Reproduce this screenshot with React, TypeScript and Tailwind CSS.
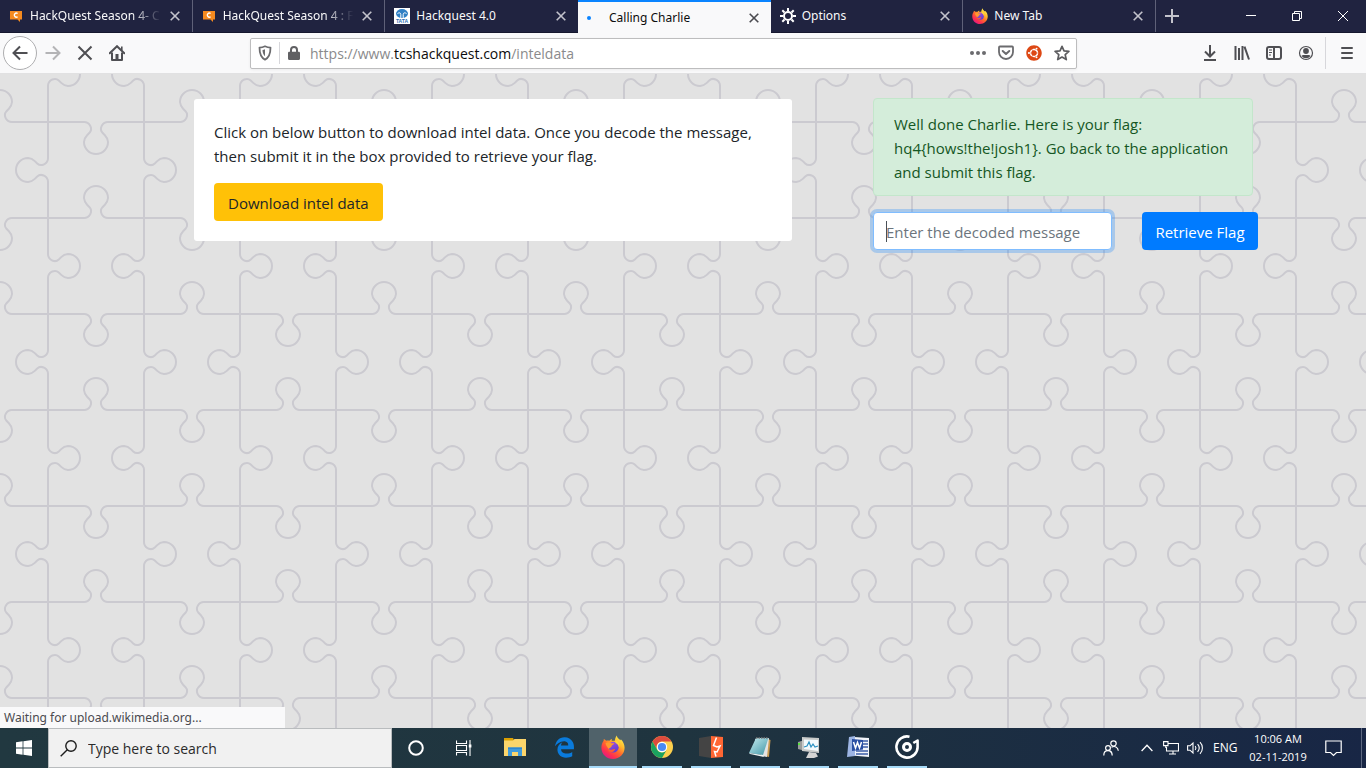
import React from "react";
import { FaEdgeLegacy, FaUbuntu } from "react-icons/fa";

const KNOB =
  "M0 -48V-12A7 7 0 0 0 3.5 -5.9L4.4 -5.5A5.9 5.9 0 0 0 10.8 -6.5L13.2 -8.9A11 11 0 0 1 20 -12A12 12 0 0 1 20 12A11 11 0 0 1 13.2 8.9L10.8 6.5A5.9 5.9 0 0 0 4.4 5.5L3.5 5.9A7 7 0 0 0 0 12V48";

const PIECES: [number, number, number][] = [
  [48, 0, 0],
  [48, 192, 0],
  [48, 96, 180],
  [144, 0, 180],
  [144, 192, 180],
  [144, 96, 0],
  [96, 48, 90],
  [0, 48, 270],
  [192, 48, 270],
  [96, 144, 270],
  [0, 144, 90],
  [192, 144, 90],
];

function Jigsaw() {
  return (
    <svg className="absolute inset-0 h-full w-full" aria-hidden="true">
      <defs>
        <pattern id="jigsaw" width="192" height="192" patternUnits="userSpaceOnUse">
          {PIECES.map(([x, y, r]) => (
            <path
              key={`${x}-${y}`}
              d={KNOB}
              transform={`translate(${x} ${y}) rotate(${r})`}
              fill="none"
              stroke="#cbcad0"
              strokeWidth="2"
            />
          ))}
        </pattern>
      </defs>
      <rect width="100%" height="100%" fill="url(#jigsaw)" />
    </svg>
  );
}

function Firefox({ id, className }: { id: string; className: string }) {
  return (
    <svg viewBox="0 0 24 24" className={className} aria-hidden="true">
      <defs>
        <linearGradient id={`${id}-body`} x1="0.85" y1="0.05" x2="0.2" y2="0.95">
          <stop offset="0" stopColor="#fff44f" />
          <stop offset="0.3" stopColor="#ffb92e" />
          <stop offset="0.55" stopColor="#ff6a2b" />
          <stop offset="0.8" stopColor="#ff2f50" />
          <stop offset="1" stopColor="#e01a86" />
        </linearGradient>
        <linearGradient id={`${id}-globe`} x1="0.3" y1="0" x2="0.7" y2="1">
          <stop offset="0" stopColor="#a04be0" />
          <stop offset="1" stopColor="#5b3fd0" />
        </linearGradient>
      </defs>
      <path
        d="M15.8 0.4c.3 1.6 1.2 2.8 2.6 4 .5-.1.8.3 1.2.9.2-.3.3-.6.2-1.1 2.4 2.3 3.8 5.3 3.8 8.600C23.600 19.200 18.400 24 12 24S.4 19.200.4 12.700c0-2.600.8-5.100 2.200-6.900L2.800 4c1 .4 1.800 1 2.300 1.700 1-.3 2.200-.3 3.300.1C9 5 9.800 4.200 11 3.900c-.3.700-.4 1.200-.3 1.900h3.100c.2-2.100.8-3.900 2-5.400z"
        fill={`url(#${id}-body)`}
      />
      <circle cx="12.300" cy="12.200" r="5.400" fill={`url(#${id}-globe)`} />
      <path
        d="M4.500 8.200c1.800-1.400 4-1.200 5.800 0h3c-.3 1.200-1.500 1.700-2.500 2.200l-.5 1.600c-1 .8-2 1.200-2.800 2.200-.8-2-2.600-3.200-3-6z"
        fill="#ff9a2e"
      />
      <path d="M7.300 13.500c1 1.300 2.700 1.700 4.200 1 1.200-.6 2-.8 2.600-.1-1 2.200-3.500 3.400-5.800 2.200-1-.8-1.300-2-1-3.100z" fill="#ff5a34" />
      <path d="M14.500 5.500c2.800.6 4.600 3.300 3.600 7.200-.3-2.500-1.500-3.700-3.600-4.700z" fill="#ffd53a" />
    </svg>
  );
}

function Comment() {
  return (
    <svg viewBox="0 0 14 12" className="mr-px h-3 w-[14px] shrink-0" aria-hidden="true">
      <path d="M1 1h12v8.500H11V12L8.500 9.500H1z" fill="#f58a1f" />
      <path d="M8.600 3.600A2 2 0 1 0 8.600 6.700" fill="none" stroke="#fff" strokeWidth="1.300" />
    </svg>
  );
}

function Tata() {
  return (
    <svg viewBox="0 0 16 16" className="h-4 w-4 shrink-0" aria-hidden="true">
      <rect width="16" height="16" fill="#fff" />
      <ellipse cx="8" cy="5.600" rx="6" ry="4.500" fill="#2f7fc4" />
      <path d="M6.800 10V6.500C6.800 4.500 5 4.500 3.500 5.500M9.200 10V6.500C9.200 4.500 11 4.500 12.500 5.500" fill="none" stroke="#fff" strokeWidth="1" />
      <text x="8" y="15" textAnchor="middle" fontSize="5" fontWeight="700" fill="#2f6fb4" fontFamily="Liberation Sans, sans-serif">
        TATA
      </text>
    </svg>
  );
}

function Gear() {
  return (
    <svg viewBox="0 0 16 16" className="h-4 w-4 shrink-0" fill="none" stroke="#fff" aria-hidden="true">
      <circle cx="8" cy="8" r="4" strokeWidth="2" />
      <path
        d="M8 0v3M8 13v3M0 8h3M13 8h3M2.300 2.300l2.200 2.200M11.500 11.500l2.200 2.200M2.300 13.700l2.200-2.200M11.500 4.500l2.200-2.200"
        strokeWidth="2"
      />
    </svg>
  );
}

function Loading() {
  return (
    <span className="flex h-4 w-4 shrink-0 items-center">
      <span className="h-1 w-1 rounded-full bg-[#0a84ff]" />
    </span>
  );
}

function Cross({ className }: { className: string }) {
  return (
    <svg viewBox="0 0 10 10" className={className} fill="none" stroke="currentColor" aria-hidden="true">
      <path d="M0.700 0.700l8.600 8.600M9.300 0.700L0.700 9.300" strokeWidth="1.600" />
    </svg>
  );
}

const TABS = [
  { icon: <Comment />, title: "HackQuest Season 4- C", active: false, line: true },
  { icon: <Comment />, title: "HackQuest Season 4 : F", active: false, line: true },
  { icon: <Tata />, title: "Hackquest 4.0", active: false, line: false },
  { icon: <Loading />, title: "Calling Charlie", active: true, line: false },
  { icon: <Gear />, title: "Options", active: false, line: true },
  { icon: <Firefox id="tab-ff" className="h-4 w-4 shrink-0" />, title: "New Tab", active: false, line: true },
];

function TabStrip() {
  return (
    <header className="flex h-[33px] border-b border-[#15172e] bg-[#202340] font-['Noto_Sans','Open_Sans',sans-serif] text-[12px] text-[#f9f9fa]">
      <div role="tablist" className="grid w-[1156px] grid-cols-6">
        {TABS.map((t) => (
          <div
            key={t.title}
            role="tab"
            aria-selected={t.active}
            className={
              t.active
                ? "-mb-px flex min-w-0 items-center gap-[6px] border-t-2 border-[#0a84ff] bg-[#f9f9fa] pl-[9px] pr-3 text-[#0c0c0d]"
                : t.line
                  ? "flex min-w-0 items-center gap-[6px] border-r border-[#5f6178] pl-[9px] pr-3"
                  : "flex min-w-0 items-center gap-[6px] pl-[9px] pr-3"
            }
          >
            {t.icon}
            <span
              className={
                t.title.length > 16
                  ? "min-w-0 flex-1 overflow-hidden whitespace-nowrap [mask-image:linear-gradient(to_right,black_76%,transparent_98%)]"
                  : "min-w-0 flex-1 whitespace-nowrap"
              }
            >
              {t.title}
            </span>
            <button aria-label="Close tab" className={t.active ? "text-[#4a4a4f]" : "text-[#c3c3cc]"}>
              <Cross className="h-[10px] w-[10px]" />
            </button>
          </div>
        ))}
      </div>
      <button aria-label="New tab" className="flex w-8 items-center justify-center text-[#c3c3cc]">
        <svg viewBox="0 0 14 14" className="h-[14px] w-[14px]" fill="none" stroke="currentColor" strokeWidth="2">
          <path d="M7 0v14M0 7h14" />
        </svg>
      </button>
      <div className="ml-auto flex">
        <button aria-label="Minimize" className="flex w-[46px] items-center justify-center">
          <svg viewBox="0 0 10 10" className="h-[10px] w-[10px]" stroke="#fff" fill="none">
            <path d="M0 4.500h10" />
          </svg>
        </button>
        <button aria-label="Restore" className="flex w-[46px] items-center justify-center">
          <svg viewBox="0 0 10 10" className="h-[10px] w-[10px]" stroke="#fff" fill="none">
            <path d="M.5 2.500h7v7h-7zM2.500 2.500v-2h7v7h-2" />
          </svg>
        </button>
        <button aria-label="Close" className="flex w-[46px] items-center justify-center">
          <svg viewBox="0 0 10 10" className="h-[10px] w-[10px]" stroke="#fff" fill="none">
            <path d="M0 0l10 10M10 0L0 10" />
          </svg>
        </button>
      </div>
    </header>
  );
}

function Toolbar() {
  return (
    <nav className="flex h-[41px] items-center border-b border-[#e1e1e2] bg-[#f9f9fa] text-[#4f4f53]">
      <div className="flex w-[250px] shrink-0 items-center pl-[3px]">
        <button aria-label="Back" className="flex h-[34px] w-[34px] items-center justify-center rounded-full border border-[#aeaeb0] bg-white">
          <svg viewBox="0 0 16 16" className="h-4 w-4" fill="none" stroke="currentColor" strokeWidth="2">
            <path d="M15.500 8H1.500M8 1.500L1.500 8L8 14.500" />
          </svg>
        </button>
        <button aria-label="Forward" className="flex h-8 w-8 items-center justify-center text-[#b4b4b6]">
          <svg viewBox="0 0 16 16" className="h-4 w-4" fill="none" stroke="currentColor" strokeWidth="2">
            <path d="M.5 8h14M8 1.500L14.500 8L8 14.500" />
          </svg>
        </button>
        <button aria-label="Stop" className="flex h-8 w-8 items-center justify-center">
          <svg viewBox="0 0 16 16" className="h-4 w-4" fill="none" stroke="currentColor" strokeWidth="2">
            <path d="M1.500 1.500l13 13M14.500 1.500l-13 13" />
          </svg>
        </button>
        <button aria-label="Home" className="flex h-8 w-8 items-center justify-center">
          <svg viewBox="0 0 16 16" className="h-4 w-4" fill="none" stroke="currentColor" strokeWidth="2">
            <path d="M.7 8.300L8 1.200l7.300 7.100" strokeLinecap="round" />
            <path d="M3 7.500V15h10V7.500" strokeLinejoin="round" />
            <rect x="6.500" y="9" width="3" height="6" fill="currentColor" stroke="none" />
            <rect x="12" y="1.500" width="1.600" height="4" fill="currentColor" stroke="none" />
          </svg>
        </button>
      </div>

      <div className="flex h-[31px] min-w-0 flex-1 items-center rounded-[2px] border border-[#bdbdbe] bg-white px-[6px] shadow-[0_1px_3px_rgba(0,0,0,0.06)]">
        <svg viewBox="0 0 16 16" className="h-4 w-4 shrink-0" fill="none" stroke="#6b6b6e" strokeWidth="1.800">
          <path d="M8 1.300c1.800.9 3.800 1.300 5.500 1.300 0 5.400-1 9.900-5.500 12.100C3.500 12.500 2.500 8 2.500 2.600c1.700 0 3.700-.4 5.500-1.300z" strokeLinejoin="round" />
          <path d="M8 4.200v7c-1.700-1.400-2.400-3.400-2.500-6.200.9-.2 1.700-.4 2.500-.8z" fill="#6b6b6e" stroke="none" />
        </svg>
        <span className="ml-[6px] h-[22px] w-px shrink-0 bg-[#d7d7db]" />
        <svg viewBox="0 0 16 16" className="ml-[6px] h-4 w-4 shrink-0" fill="#606063">
          <path d="M2 8.200C2 7.300 2.600 6.800 3.400 6.800H4V5a4 4 0 0 1 8 0v1.800h.6c.8 0 1.400.5 1.400 1.400v5.300c0 .9-.6 1.500-1.400 1.500H3.400C2.600 15 2 14.400 2 13.500zM6 6.800h4V5a2 2 0 0 0-4 0z" />
        </svg>
        <div className="ml-2 min-w-0 flex-1 truncate text-[14px] text-[#8a8a8c]">
          https://www.<span className="text-[#0c0c0d]">tcshackquest.com</span>/inteldata
        </div>
        <div className="flex shrink-0 items-center gap-3">
          <button aria-label="Page actions">
            <svg viewBox="0 0 16 16" className="h-4 w-4" fill="#6b6b6e">
              <circle cx="2" cy="8" r="2" />
              <circle cx="8" cy="8" r="2" />
              <circle cx="14" cy="8" r="2" />
            </svg>
          </button>
          <button aria-label="Save to Pocket">
            <svg viewBox="0 0 16 16" className="h-4 w-4" fill="none" stroke="#6b6b6e" strokeWidth="1.800">
              <path d="M1 2.500c0-.6.300-1 .9-1h12.200c.6 0 .9.400.9 1V7a7 7 0 0 1-14 0z" />
              <path d="M4.700 6L8 9l3.300-3" strokeWidth="2" strokeLinecap="round" strokeLinejoin="round" />
            </svg>
          </button>
          <button aria-label="Ubuntu extension">
            <FaUbuntu className="h-4 w-4 text-[#dd4814]" />
          </button>
          <button aria-label="Bookmark">
            <svg viewBox="0 0 16 16" className="h-4 w-4" fill="none" stroke="#5c5c5f" strokeWidth="1.700" strokeLinejoin="round">
              <path d="M8 1.300l2 4.600 4.900.5-3.700 3.300 1.100 4.900L8 12.100l-4.300 2.500 1.100-4.900L1.100 6.400 6 5.900z" />
            </svg>
          </button>
        </div>
      </div>

      <div className="flex w-[289px] shrink-0 items-center justify-end">
        <button aria-label="Downloads" className="flex h-8 w-8 items-center justify-center">
          <svg viewBox="0 0 16 16" className="h-4 w-4" fill="none" stroke="currentColor" strokeWidth="2">
            <path d="M8 0v11M3 6.500l5 5 5-5M2 15h12" />
          </svg>
        </button>
        <button aria-label="Library" className="flex h-8 w-8 items-center justify-center">
          <svg viewBox="0 0 16 16" className="h-4 w-4" fill="none" stroke="currentColor" strokeWidth="2">
            <path d="M1.500 1v14M5 3v12M8.500 1v14M10.500 1.700L15 14.500" />
          </svg>
        </button>
        <button aria-label="Sidebars" className="flex h-8 w-8 items-center justify-center">
          <svg viewBox="0 0 16 16" className="h-4 w-4" fill="none" stroke="currentColor" strokeWidth="2">
            <rect x="1" y="2" width="14" height="12" rx="2" />
            <path d="M8 2v12" />
            <path d="M3 5h3M3 7.500h3M3 10h2" strokeWidth="1" />
          </svg>
        </button>
        <button aria-label="Account" className="flex h-8 w-8 items-center justify-center">
          <svg viewBox="0 0 16 16" className="h-4 w-4">
            <circle cx="8" cy="8" r="6.500" fill="none" stroke="currentColor" strokeWidth="1.200" />
            <circle cx="8" cy="6" r="2.900" fill="currentColor" />
            <path d="M3.500 11c1-1.600 2.500-1 4.500-1s3.500-.6 4.500 1A5.600 5.600 0 0 1 8 13.300 5.600 5.600 0 0 1 3.500 11z" fill="currentColor" />
          </svg>
        </button>
        <span className="ml-[3px] h-8 w-px bg-[#d7d7db]" />
        <button aria-label="Menu" className="ml-[5px] mr-[3px] flex h-8 w-8 items-center justify-center">
          <svg viewBox="0 0 16 16" className="h-4 w-4" fill="none" stroke="currentColor" strokeWidth="2" strokeLinecap="round">
            <path d="M3 3h10M3 8h10M3 13h10" />
          </svg>
        </button>
      </div>
    </nav>
  );
}

function PageBody() {
  return (
    <main className="relative flex-1 bg-[#e2e2e2] text-[15px] leading-6 text-[#212529]">
      <Jigsaw />
      <div className="relative flex items-start justify-center gap-[81px] pl-[86px] pt-6">
        <section className="mt-px w-[598px] rounded-[3px] bg-white p-5">
          <p className="mt-px">
            Click on below button to download intel data. Once you decode the message, then submit it in the box provided to
            retrieve your flag.
          </p>
          <button className="mt-[15px] h-[38px] rounded bg-[#ffc107] px-[14px] pt-[2px]">Download intel data</button>
        </section>
        <form className="w-[385px]" onSubmit={(e) => e.preventDefault()}>
          <p role="alert" className="mr-[5px] rounded border border-[#c3e6cb] bg-[#d4edda] px-5 pb-[11px] pt-[13px] text-[#155724]">
            Well done Charlie. Here is your flag: hq4&#123;hows!the!josh1&#125;. Go back to the application and submit this flag.
          </p>
          <div className="mt-4 flex justify-between">
            <div className="relative w-[239px]">
              <input
                type="text"
                aria-label="Decoded message"
                placeholder="Enter the decoded message"
                className="h-[38px] w-full rounded border border-[#80bdff] bg-white px-3 pt-[2px] shadow-[0_0_0_3px_rgba(0,123,255,0.25)] outline-none placeholder:text-[#6c757d]"
              />
              <span className="absolute left-[13px] top-[9px] h-[21px] w-px bg-[#495057]" />
            </div>
            <button type="submit" className="h-[38px] w-[116px] rounded bg-[#007bff] pt-[2px] text-white">
              Retrieve Flag
            </button>
          </div>
        </form>
      </div>
      <div className="absolute bottom-0 left-0 h-[21px] w-[285px] bg-[#f9f9fa] pl-1 font-['Noto_Sans','Open_Sans',sans-serif] text-[12px] leading-[22px] text-[#4a4a4f]">
        Waiting for upload.wikimedia.org...
      </div>
    </main>
  );
}

function Explorer() {
  return (
    <svg viewBox="0 0 22 20" className="h-5 w-[22px]">
      <path d="M0 1h9l1 2v3H0z" fill="#dba002" />
      <path d="M0 3.500h9L10.500 2H22v17H0z" fill="#fbd56b" />
      <path d="M4 19v-8.500h14V19h-4v-4H8v4z" fill="#3f9bdc" />
      <path d="M4 10.500h14V12H4z" fill="#2f86cf" />
    </svg>
  );
}

function Chrome() {
  return (
    <svg viewBox="0 0 22 22" className="h-[22px] w-[22px]">
      <circle cx="11" cy="11" r="11" fill="#fdd04d" />
      <path d="M1.500 5.500A11 11 0 0 1 20.500 5.500H11A5.500 5.500 0 0 0 6.200 13.700z" fill="#dd4b3e" />
      <path d="M1.500 5.500L6.200 13.700A5.500 5.500 0 0 0 15.700 13.700L11 22A11 11 0 0 1 1.500 5.500z" fill="#1aa260" />
      <circle cx="11" cy="11" r="5.200" fill="#fff" />
      <circle cx="11" cy="11" r="4.100" fill="#4a8af4" />
    </svg>
  );
}

function Burp() {
  return (
    <svg viewBox="0 0 24 24" className="h-6 w-6">
      <path d="M0 3l12-2v22L0 21z" fill="#444" />
      <path d="M12 1l12 1v20l-12 1z" fill="#ff6633" />
      <path d="M17.500 2.500l-3 8 3.500 1.500 3-1-3 6-2.500-.5 1.500 5" fill="none" stroke="#fff" strokeWidth="1.500" />
    </svg>
  );
}

function Notepad() {
  return (
    <svg viewBox="0 0 24 22" className="h-[22px] w-6">
      <defs>
        <linearGradient id="note-page" x1="0" y1="0" x2="1" y2="1">
          <stop offset="0" stopColor="#c7eef2" />
          <stop offset="1" stopColor="#3e94a5" />
        </linearGradient>
      </defs>
      <path d="M20 3l2.500 1L21 21l-4-1z" fill="#c99b52" />
      <path d="M7 3l14-1-2 19-5-1z" fill="#e4e4e4" />
      <path d="M8 2l12.500 0L15 19 1 17z" fill="url(#note-page)" />
      <path d="M8 2h12.500" stroke="#777" strokeWidth="1.500" strokeDasharray="1.500 1" />
      <path d="M1 17l14 2 1 2L2 18z" fill="#eef5f5" />
    </svg>
  );
}

function Monitor() {
  return (
    <svg viewBox="0 0 24 22" className="h-[22px] w-6">
      <path d="M1 6l7-2v11l-7-2z" fill="#9b9d9c" />
      <path d="M1 7h2v2H1z" fill="#57e33b" />
      <path d="M5 1l17 1v15L5 15z" fill="#c9cbca" />
      <path d="M7 3.500l14 .5v11L7 13z" fill="#f3fafd" />
      <path d="M7 11l3-1 2-4 2 5 2-3 2 3 3-1" fill="none" stroke="#2b91c2" strokeWidth="1.200" />
      <path d="M12 16l7 1 2 3.500-4 1.500H9z" fill="#d4d4d4" />
    </svg>
  );
}

function Word() {
  return (
    <svg viewBox="0 0 22 22" className="h-[22px] w-[22px]">
      <path d="M7 1l15 1v19L5 19.500z" fill="#f1f4fa" />
      <path d="M16 5h5M16 8h5M16 11h5M9 15h12M9 18h12" stroke="#3c5da8" strokeWidth="1.300" />
      <path d="M2 1l6-1v20l-8 1z" fill="#9db5e4" />
      <path d="M5 3l11 1v9.500L5 15z" fill="#2a4fa3" />
      <path d="M6.500 6l2 6 2-5.500 2 5.500 2-6" fill="none" stroke="#fff" strokeWidth="1.500" />
    </svg>
  );
}

function Groove() {
  return (
    <svg viewBox="0 0 24 24" className="h-6 w-6" fill="none" stroke="#fff">
      <path d="M14.500 1.700A10.600 10.600 0 1 0 22.600 11.500V5.500L18.300 8" strokeWidth="2.600" strokeLinejoin="round" />
      <circle cx="12" cy="12" r="3.500" strokeWidth="3" />
    </svg>
  );
}

const APPS = [
  { name: "File Explorer", icon: <Explorer />, state: "idle" },
  { name: "Edge", icon: <FaEdgeLegacy className="h-[21px] w-[21px] text-[#0a7bdc]" />, state: "idle" },
  { name: "Firefox", icon: <Firefox id="bar-ff" className="h-6 w-6" />, state: "active" },
  { name: "Chrome", icon: <Chrome />, state: "open" },
  { name: "Burp Suite", icon: <Burp />, state: "open" },
  { name: "Notepad", icon: <Notepad />, state: "open" },
  { name: "Resource Monitor", icon: <Monitor />, state: "open" },
  { name: "Word", icon: <Word />, state: "open" },
  { name: "Groove Music", icon: <Groove />, state: "open" },
];

function Taskbar() {
  return (
    <footer className="flex h-10 bg-gradient-to-r from-[#213840] via-[#1f343f] to-[#182645] text-white">
      <button aria-label="Start" className="flex w-12 items-center justify-center">
        <svg viewBox="0 0 16 16" className="h-4 w-4" fill="#fff">
          <path d="M0 2.300L6.600 1.300V7.600H0zM7.400 1.200L16 0v7.600H7.400zM0 8.400h6.600v6.300L0 13.700zM7.400 8.400H16V16l-8.600-1.200z" />
        </svg>
      </button>
      <label className="flex w-[344px] items-center gap-[11px] border border-[#b9bcbe] bg-[#f1f1f1] pl-[11px]">
        <svg viewBox="0 0 17 17" className="h-[17px] w-[17px]" fill="none" stroke="#1d1d1d" strokeWidth="1.400">
          <circle cx="11" cy="6" r="5.200" />
          <path d="M7.300 9.700L.7 16.300" />
        </svg>
        <input
          type="text"
          aria-label="Search"
          placeholder="Type here to search"
          className="min-w-0 flex-1 bg-transparent text-[14px] outline-none placeholder:text-[#2b2b2b]"
        />
      </label>
      <button aria-label="Cortana" className="flex w-12 items-center justify-center">
        <svg viewBox="0 0 16 16" className="h-4 w-4" fill="none" stroke="#fff" strokeWidth="2">
          <circle cx="8" cy="8" r="6.800" />
        </svg>
      </button>
      <button aria-label="Task View" className="flex w-12 items-center justify-center">
        <svg viewBox="0 0 16 16" className="h-4 w-4" fill="none" stroke="#fff" strokeWidth="1.100">
          <path d="M.5 .5v3h10v-3M.5 15.500v-3h10v3M.5 5.500h10v5H.5zM14 0v16" />
          <rect x="12.800" y="4.500" width="2.600" height="3" fill="#fff" stroke="none" />
        </svg>
      </button>
      <div className="ml-[3px] flex gap-px">
        {APPS.map((a) => (
          <button
            key={a.name}
            aria-label={a.name}
            className={a.state === "active" ? "flex w-12 flex-col items-center bg-[#50626a]" : "flex w-12 flex-col items-center"}
          >
            <span className="flex h-[38px] items-center justify-center">{a.icon}</span>
            <span
              className={
                a.state === "idle" ? "h-[2px] w-10" : a.state === "active" ? "h-[2px] w-full bg-[#a6daf8]" : "h-[2px] w-10 bg-[#a6daf8]"
              }
            />
          </button>
        ))}
      </div>
      <div className="ml-auto flex items-center text-[12px]">
        <button aria-label="People">
          <svg viewBox="0 0 16 16" className="h-4 w-4" fill="none" stroke="#fff" strokeWidth="1.200">
            <circle cx="10.500" cy="3.500" r="2.700" />
            <circle cx="5" cy="8" r="2.400" />
            <path d="M.8 15.500c0-3 1.800-4.800 4.200-4.800s4.200 1.800 4.200 4.800M8.500 7.300c3-1.800 6.500-.3 6.800 3.400" />
          </svg>
        </button>
        <button aria-label="Show hidden icons" className="ml-[22px]">
          <svg viewBox="0 0 12 8" className="h-2 w-3" fill="none" stroke="#fff" strokeWidth="1.300">
            <path d="M.6 7L6 1.300 11.400 7" />
          </svg>
        </button>
        <button aria-label="Network" className="ml-[10px]">
          <svg viewBox="0 0 16 14" className="h-[14px] w-4" fill="none" stroke="#fff" strokeWidth="1.100">
            <path d="M5.500 2.500h10v7.500h-12V6M10 10v3M6 13h7M.6 .6h4.400v4H.6zM2.800 4.600V6.500h1" />
          </svg>
        </button>
        <button aria-label="Volume" className="ml-2">
          <svg viewBox="0 0 17 14" className="h-[14px] w-[17px]" fill="none" stroke="#fff" strokeWidth="1.100">
            <path d="M.6 4.800h2.400L6 2v10L3 9.200H.6zM8.200 5c1 1.300 1 2.700 0 4M10.600 3.200c2 2.300 2 5.300 0 7.600M13 1.200c3.200 3.300 3.200 8.300 0 11.600" />
          </svg>
        </button>
        <span className="ml-[9px] w-[25px]">ENG</span>
        <div className="ml-[9px] w-[62px] whitespace-nowrap text-center text-[11px] leading-[18px]">
          <div>10:06 AM</div>
          <div>02-11-2019</div>
        </div>
        <button aria-label="Notifications" className="ml-[16px]">
          <svg viewBox="0 0 17 17" className="h-[17px] w-[17px]" fill="none" stroke="#fff" strokeWidth="1.200">
            <path d="M.8 1h15.400v11.500h-4.700L8.500 15.500 5.500 12.500H.8z" />
          </svg>
        </button>
        <span className="ml-[19px] mr-1 h-10 w-px bg-[#5d6880]" />
      </div>
    </footer>
  );
}

export default function App() {
  return (
    <div className="flex min-h-screen flex-col overflow-hidden font-['Open_Sans','Noto_Sans',sans-serif]">
      <TabStrip />
      <Toolbar />
      <PageBody />
      <Taskbar />
    </div>
  );
}
